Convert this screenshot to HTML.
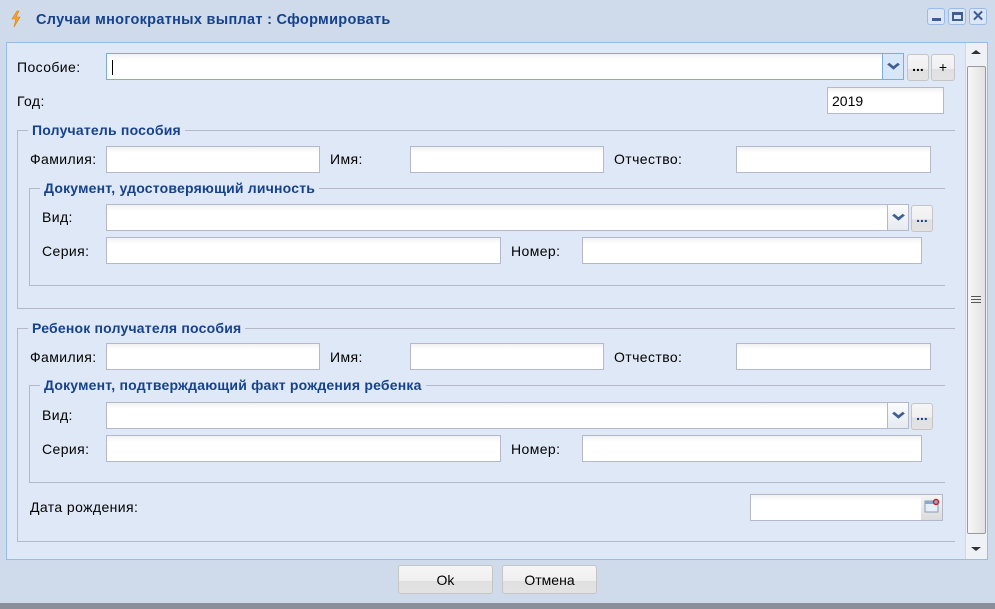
<!DOCTYPE html>
<html><head><meta charset="utf-8"><style>
*{box-sizing:border-box;margin:0;padding:0}
body{width:995px;height:609px;overflow:hidden;background:#cfdbea;font:14px "Liberation Sans",Arial,sans-serif;color:#000;position:relative}
.a{position:absolute}
.lbl{position:absolute;font-size:14px;line-height:16px;letter-spacing:.4px}
.inp{position:absolute;height:27px;background:linear-gradient(#f2f2f2,#fff 6px);border:1px solid #b5b8c8;font-size:14px}
.trg{position:absolute;height:27px;width:21px;border:1px solid #b5b8c8;border-left:none;background:linear-gradient(#fafbfc,#e6ebf2)}
.trg:after{content:"";position:absolute;left:6px;top:6px;width:6px;height:6px;border-right:3px solid #3f5f94;border-bottom:3px solid #3f5f94;transform:scale(1,.8) rotate(45deg)}
.btn{position:absolute;height:27px;border:1px solid #c5c5c5;border-radius:3px;background:linear-gradient(#f5f5f5 0,#f0f0f0 55%,#e0e0e0 55%,#e3e3e3);text-align:center;font-size:14px}
.fs{position:absolute;border:1px solid #b5b8c8;border-right:none}
.leg{position:absolute;background:#dfe8f6;color:#15428b;font-weight:bold;padding:0 4px;line-height:16px;font-size:14px;letter-spacing:.2px}
</style></head><body>
<div class="a" style="left:0;top:603px;width:995px;height:6px;background:#8a8f99"></div>
<svg class="a" style="left:10px;top:10px" width="12" height="18" viewBox="0 0 12 18"><path d="M7 1 L2 9 L6 9 L4 17 L10 7 L6 7 L9 1Z" fill="#f6a623" stroke="#e07b00" stroke-width=".6"/></svg>
<div class="a" style="left:36px;top:12px;font-weight:bold;color:#15428b;font-size:14.5px;letter-spacing:.3px">Случаи многократных выплат : Сформировать</div>
<div class="a" style="left:927px;top:8px;width:18px;height:17px;border:1px solid #99bbe8;border-radius:3px;background:#dde7f4"><div class="a" style="left:4px;top:9px;width:9px;height:3px;background:#3f5f94"></div></div>
<div class="a" style="left:948px;top:8px;width:18px;height:17px;border:1px solid #99bbe8;border-radius:3px;background:#dde7f4"><div class="a" style="left:3px;top:3px;width:11px;height:9px;border:2px solid #3f5f94;border-top-width:3px"></div></div>
<div class="a" style="left:969px;top:8px;width:18px;height:17px;border:1px solid #99bbe8;border-radius:3px;background:#dde7f4;color:#3f5f94;font-size:15px;line-height:15px;text-align:center;font-weight:bold">✕</div>

<div class="a" style="left:6px;top:42px;width:982px;height:518px;background:#dfe8f6;border:1px solid #99bbe8"></div>
<div class="a" style="left:965px;top:43px;width:22px;height:516px;background:#eef1f5;border-left:1px solid #d0d8e2"></div>
<div class="a" style="left:967px;top:66px;width:19px;height:468px;border:1px solid #999;border-radius:2px;background:linear-gradient(90deg,#f7f7f7,#e2e2e2)"></div>
<div class="a" style="left:971px;top:296px;width:10px;height:7px;border-top:1px solid #555;border-bottom:1px solid #555"><div style="margin-top:2px;height:1px;background:#555"></div></div>
<div class="a" style="left:971px;top:50px;width:0;height:0;border-left:5px solid transparent;border-right:5px solid transparent;border-bottom:4px solid #333"></div>
<div class="a" style="left:971px;top:547px;width:0;height:0;border-left:5px solid transparent;border-right:5px solid transparent;border-top:4px solid #333"></div>

<div class="lbl" style="left:17px;top:59px">Пособие:</div>
<div class="inp" style="left:106px;top:53px;width:777px;border-color:#7eadd9"><div class="a" style="left:5px;top:6px;width:1px;height:15px;background:#000"></div></div>
<div class="trg" style="left:882px;top:53px;width:22px;border-color:#7eadd9;border-left:1px solid #7eadd9;background:#d8e7f8"></div>
<div class="btn" style="left:907px;top:54px;width:22px;line-height:22px;font-weight:bold">...</div>
<div class="btn" style="left:931px;top:54px;width:24px;line-height:24px">+</div>

<div class="lbl" style="left:17px;top:93px">Год:</div>
<div class="inp" style="left:827px;top:87px;width:117px;padding:5px 4px">2019</div>

<div class="fs" style="left:17px;top:130px;width:938px;height:179px;border-bottom:1px solid #b5b8c8"></div>
<div class="leg" style="left:28px;top:122px">Получатель пособия</div>
<div class="lbl" style="left:30px;top:151px">Фамилия:</div>
<div class="inp" style="left:106px;top:146px;width:214px"></div>
<div class="lbl" style="left:330px;top:151px">Имя:</div>
<div class="inp" style="left:410px;top:146px;width:194px"></div>
<div class="lbl" style="left:614px;top:151px">Отчество:</div>
<div class="inp" style="left:736px;top:146px;width:195px"></div>

<div class="fs" style="left:29px;top:188px;width:916px;height:98px;border-bottom:1px solid #b5b8c8"></div>
<div class="leg" style="left:40px;top:180px">Документ, удостоверяющий личность</div>
<div class="lbl" style="left:42px;top:209px">Вид:</div>
<div class="inp" style="left:106px;top:204px;width:782px"></div>
<div class="trg" style="left:888px;top:204px"></div>
<div class="btn" style="left:911px;top:205px;width:22px;line-height:22px;font-weight:bold;color:#15428b">...</div>
<div class="lbl" style="left:42px;top:243px">Серия:</div>
<div class="inp" style="left:106px;top:237px;width:395px"></div>
<div class="lbl" style="left:511px;top:243px">Номер:</div>
<div class="inp" style="left:582px;top:237px;width:340px"></div>

<div class="fs" style="left:17px;top:328px;width:938px;height:214px;border-bottom:1px solid #b5b8c8"></div>
<div class="leg" style="left:28px;top:320px">Ребенок получателя пособия</div>
<div class="lbl" style="left:30px;top:349px">Фамилия:</div>
<div class="inp" style="left:106px;top:343px;width:214px"></div>
<div class="lbl" style="left:330px;top:349px">Имя:</div>
<div class="inp" style="left:410px;top:343px;width:194px"></div>
<div class="lbl" style="left:614px;top:349px">Отчество:</div>
<div class="inp" style="left:736px;top:343px;width:195px"></div>

<div class="fs" style="left:29px;top:385px;width:916px;height:98px;border-bottom:1px solid #b5b8c8"></div>
<div class="leg" style="left:40px;top:377px">Документ, подтверждающий факт рождения ребенка</div>
<div class="lbl" style="left:42px;top:407px">Вид:</div>
<div class="inp" style="left:106px;top:402px;width:782px"></div>
<div class="trg" style="left:888px;top:402px"></div>
<div class="btn" style="left:911px;top:403px;width:22px;line-height:22px;font-weight:bold;color:#15428b">...</div>
<div class="lbl" style="left:42px;top:441px">Серия:</div>
<div class="inp" style="left:106px;top:435px;width:395px"></div>
<div class="lbl" style="left:511px;top:441px">Номер:</div>
<div class="inp" style="left:582px;top:435px;width:340px"></div>

<div class="lbl" style="left:30px;top:499px">Дата рождения:</div>
<div class="inp" style="left:750px;top:494px;width:172px"></div>
<div class="a" style="left:921px;top:494px;width:22px;height:27px;border:1px solid #b5b8c8;border-left:none;background:linear-gradient(#f4f4f4,#dcdcdc)"></div>
<svg class="a" style="left:924px;top:498px" width="16" height="16"><rect x="1" y="3" width="13" height="11" fill="#e6eef8" stroke="#7f9db9"/><rect x="1" y="3" width="13" height="3" fill="#8fa9cc"/><circle cx="12" cy="4" r="2.5" fill="none" stroke="#c0272d" stroke-width="1.5"/></svg>

<div class="btn" style="left:398px;top:565px;width:95px;height:29px;line-height:28px">Ok</div>
<div class="btn" style="left:502px;top:565px;width:95px;height:29px;line-height:28px">Отмена</div>
</body></html>
